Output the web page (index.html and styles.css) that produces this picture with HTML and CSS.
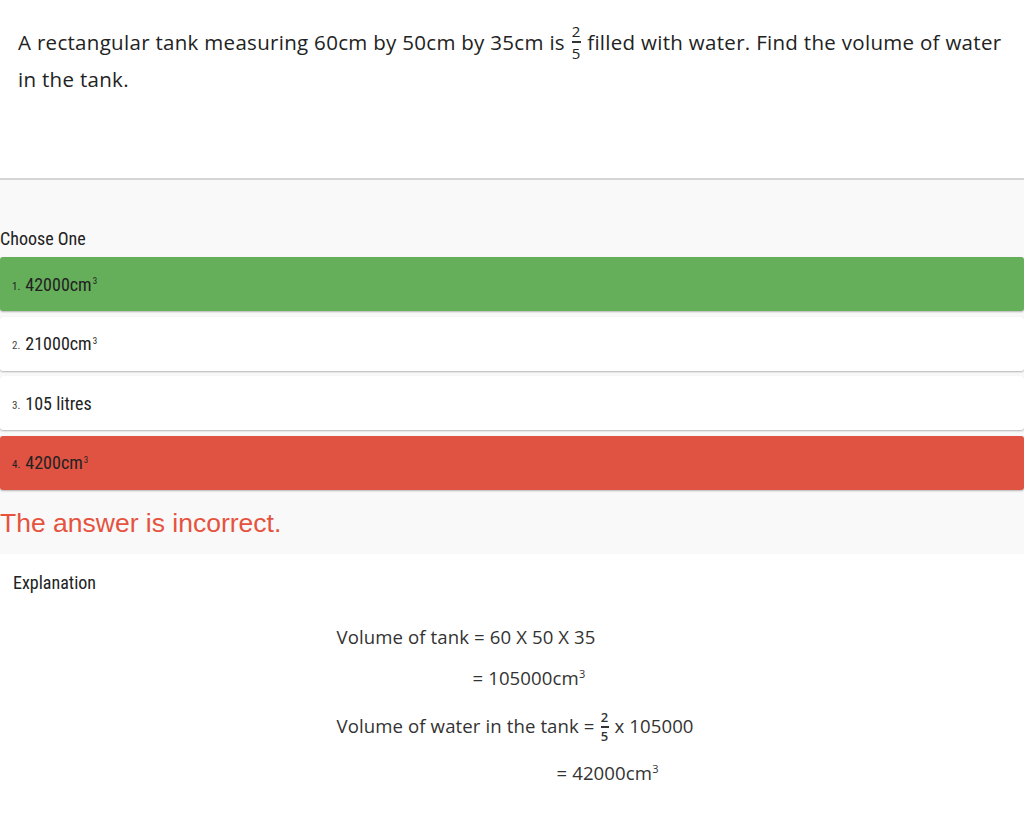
FILE: index.html
```html
<!DOCTYPE html>
<html>
<head>
<meta charset="utf-8">
<link rel="stylesheet" href="styles.css">
</head>
<body>
<div class="question">
  <p>A rectangular tank measuring 60cm by 50cm by 35cm is <span class="frac"><span>2</span><span class="bar"></span><span>5</span></span> filled with water. Find the volume of water in the tank.</p>
</div>
<div class="quiz">
  <div class="choose">Choose One</div>
  <div class="option correct"><span class="num">1.</span>42000cm<sup>3</sup></div>
  <div class="option"><span class="num">2.</span>21000cm<sup>3</sup></div>
  <div class="option"><span class="num">3.</span>105 litres</div>
  <div class="option wrong"><span class="num">4.</span>4200cm<sup>3</sup></div>
  <div class="result">The answer is incorrect.</div>
</div>
<div class="explanation">
  <div class="exp-title">Explanation</div>
  <div class="exp-body">
    <div class="working">
      <div class="line">Volume of tank = 60 X 50 X 35</div>
      <div class="line l2">= 105000cm<sup>3</sup></div>
      <div class="line l3">Volume of water in the tank = <span class="frac small"><span>2</span><span class="bar"></span><span>5</span></span> x 105000</div>
      <div class="line l4">= 42000cm<sup>3</sup></div>
    </div>
  </div>
</div>
</body>
</html>
```
FILE: styles.css
```css
* { box-sizing: border-box; }
body {
  margin: 0;
  background: #ffffff;
  color: #222;
}
.question {
  height: 178px;
  padding: 24px 14px 0 18px;
  font-family: "Open Sans", "Noto Sans", sans-serif;
  font-size: 20.5px;
  letter-spacing: 0.3px;
  color: #222;
}
.question p {
  margin: 0;
  line-height: 37px;
}
.frac {
  display: inline-flex;
  flex-direction: column;
  align-items: center;
  vertical-align: middle;
  font-size: 15px;
  line-height: 14px;
  margin: -8px 1px;
  position: relative;
  top: -3px;
  letter-spacing: 0;
}
.frac .bar {
  display: block;
  width: 9px;
  height: 2px;
  background: #333;
  margin: 3px 0;
}
.quiz {
  background: #f9f9f9;
  border-top: 2px solid #d4d4d4;
  padding-top: 48px;
  height: 376px;
  font-family: "Liberation Sans Narrow", "Roboto", sans-serif;
  font-stretch: condensed;
}
.choose {
  font-size: 18px;
  line-height: 22px;
  color: #222;
  margin-bottom: 7px;
}
.option {
  height: 54px;
  display: flex;
  align-items: center;
  padding-left: 12px;
  margin-bottom: 5.5px;
  background: #ffffff;
  border-radius: 3px;
  box-shadow: 0 1px 2px rgba(0,0,0,0.28);
  font-size: 18px;
  color: #222;
}
.option sup {
  font-size: 9px;
  margin-left: 1px;
  position: relative;
  top: -3px;
}
.option .num {
  font-size: 11px;
  color: #444;
  margin-right: 5px;
  position: relative;
  top: 2px;
}
.option.correct { background: #65ae5a; }
.option.wrong { background: #e05343; }
.option.correct .num, .option.wrong .num { color: #222; }
.result {
  margin-top: 18px;
  font-family: "Liberation Sans", "Roboto", sans-serif;
  font-stretch: normal;
  font-size: 26.5px;
  color: #e5533f;
}
.explanation {
  padding-top: 18px;
}
.exp-title {
  padding-left: 13px;
  font-family: "Liberation Sans Narrow", "Roboto", sans-serif;
  font-stretch: condensed;
  font-size: 18px;
  line-height: 22px;
  color: #222;
}
.exp-body {
  display: flex;
  justify-content: center;
  margin-top: 32px;
}
.working {
  width: 360px;
  font-family: "Open Sans", "Noto Sans", sans-serif;
  font-size: 18.6px;
  letter-spacing: 0.1px;
  color: #333;
  margin-left: 9px;
}
.line {
  line-height: 22px;
  margin-bottom: 19px;
}
.line sup { font-size: 11px; line-height: 0; }
.l2 { padding-left: 136px; margin-bottom: 26px; }
.l3 { margin-bottom: 25px; }
.l4 { padding-left: 220px; }
.frac.small { font-size: 13px; line-height: 13px; top: -1px; font-weight: 600; margin: -8px 1px; }
.frac.small .bar { width: 8px; margin: 2px 0; }
```
